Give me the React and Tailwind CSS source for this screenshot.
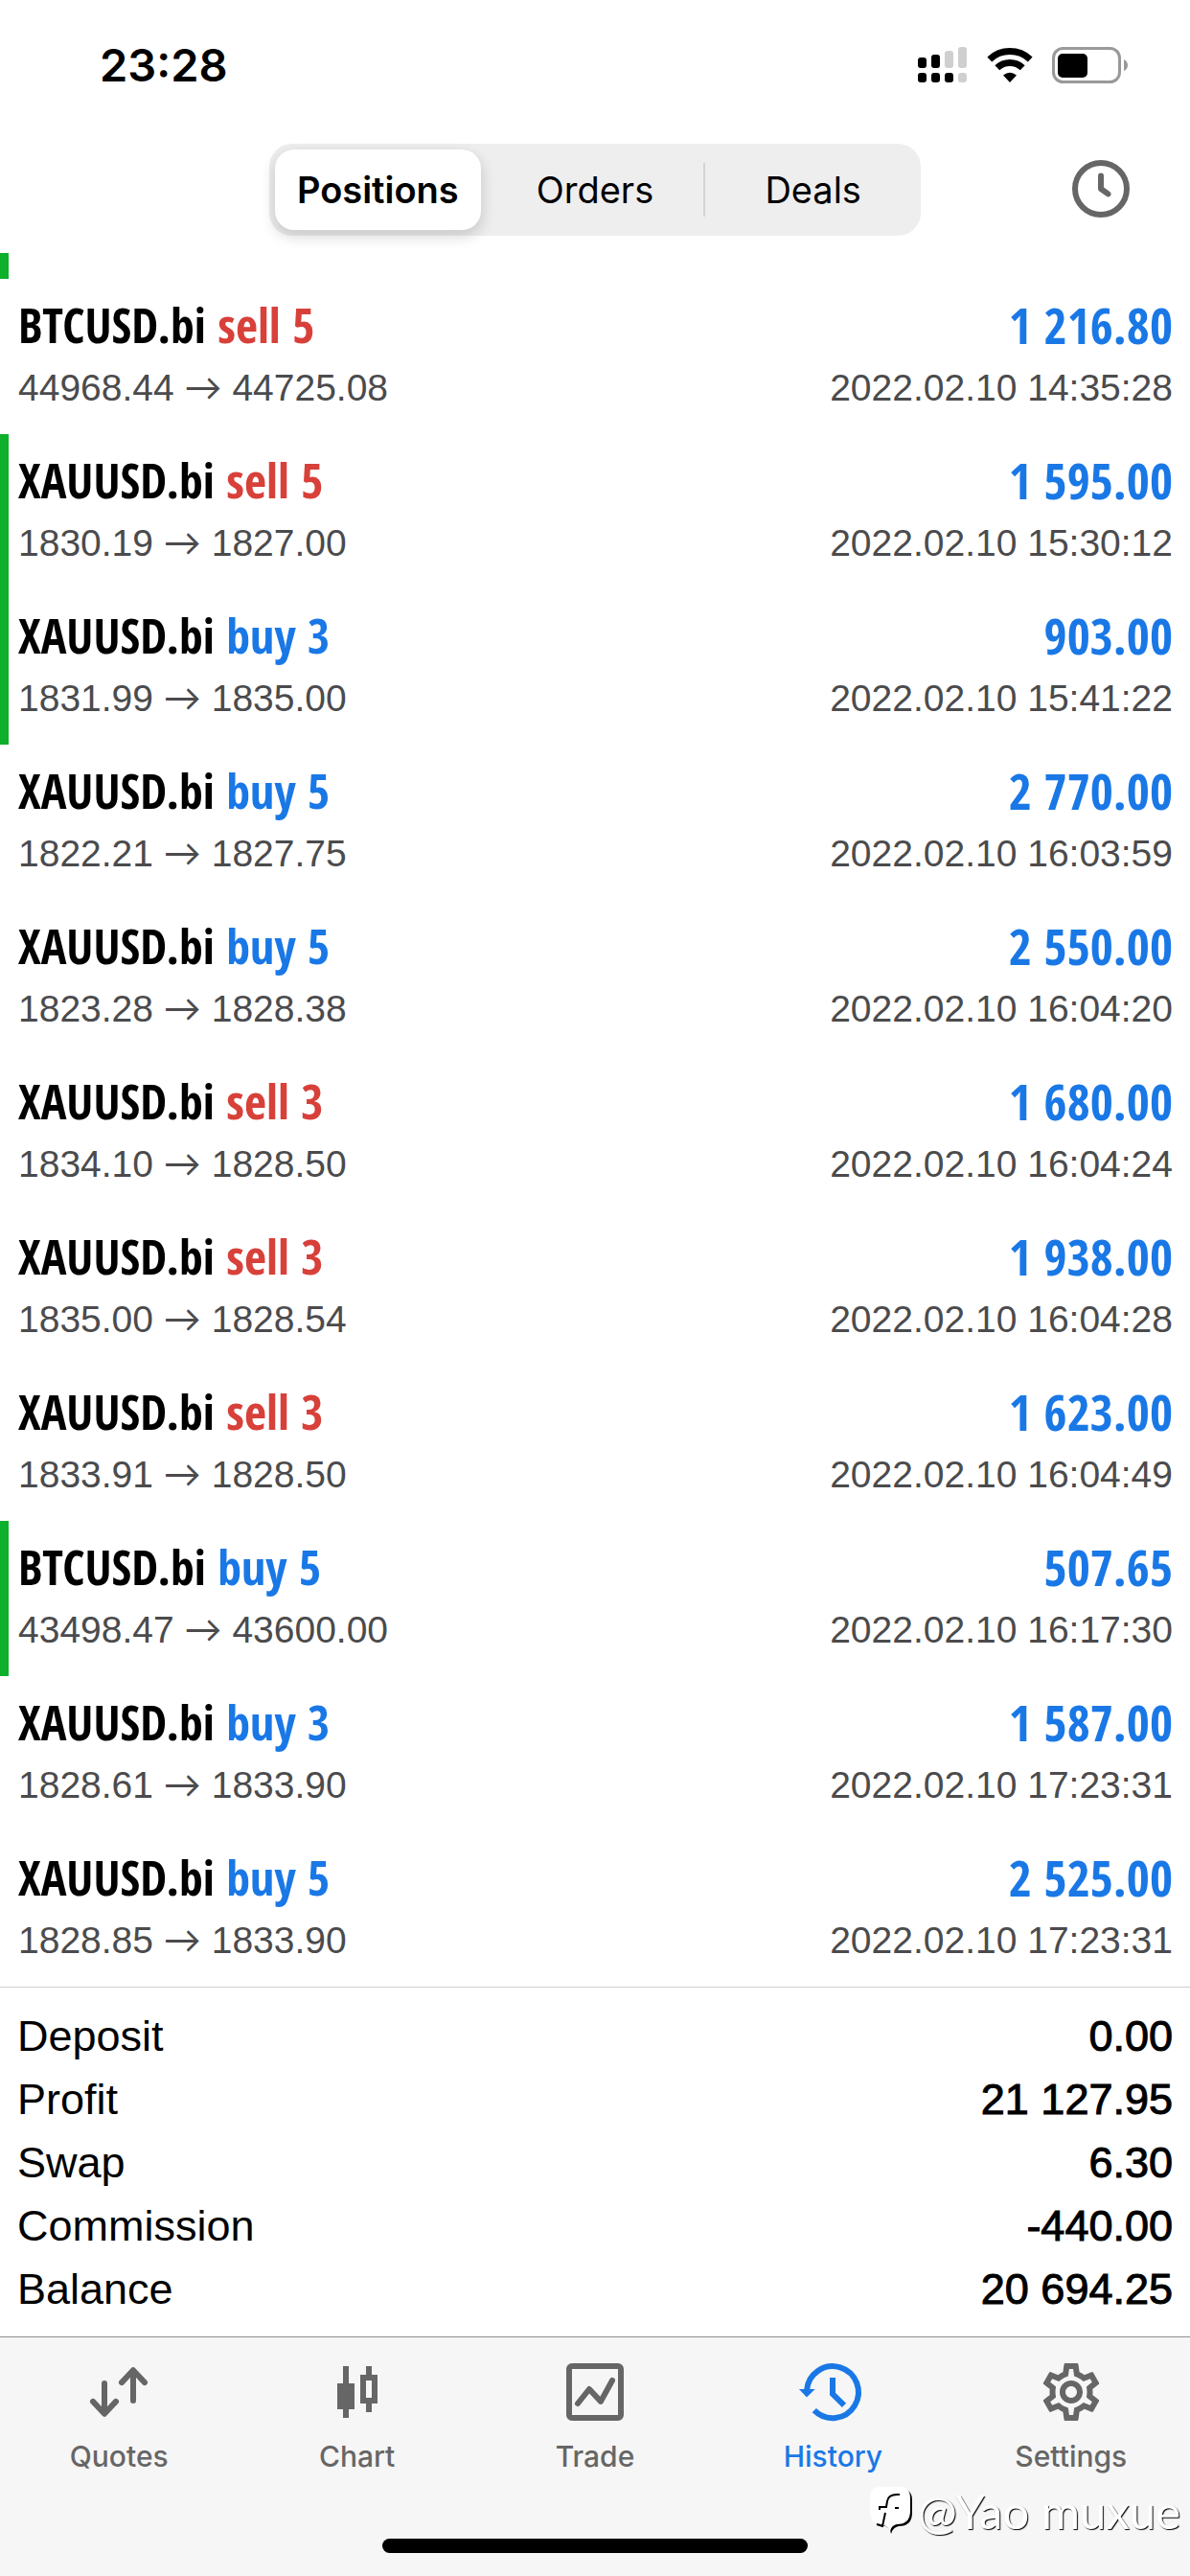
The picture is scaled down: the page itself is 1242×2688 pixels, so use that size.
import { MdOutlineSettings } from 'react-icons/md';

const deals = [
  ['BTCUSD.bi', 'sell', 5, '44968.44', '44725.08', '1 216.80', '14:35:28', false],
  ['XAUUSD.bi', 'sell', 5, '1830.19', '1827.00', '1 595.00', '15:30:12', true],
  ['XAUUSD.bi', 'buy', 3, '1831.99', '1835.00', '903.00', '15:41:22', true],
  ['XAUUSD.bi', 'buy', 5, '1822.21', '1827.75', '2 770.00', '16:03:59', false],
  ['XAUUSD.bi', 'buy', 5, '1823.28', '1828.38', '2 550.00', '16:04:20', false],
  ['XAUUSD.bi', 'sell', 3, '1834.10', '1828.50', '1 680.00', '16:04:24', false],
  ['XAUUSD.bi', 'sell', 3, '1835.00', '1828.54', '1 938.00', '16:04:28', false],
  ['XAUUSD.bi', 'sell', 3, '1833.91', '1828.50', '1 623.00', '16:04:49', false],
  ['BTCUSD.bi', 'buy', 5, '43498.47', '43600.00', '507.65', '16:17:30', true],
  ['XAUUSD.bi', 'buy', 3, '1828.61', '1833.90', '1 587.00', '17:23:31', false],
  ['XAUUSD.bi', 'buy', 5, '1828.85', '1833.90', '2 525.00', '17:23:31', false],
];

const totals = [
  ['Deposit', '0.00'],
  ['Profit', '21 127.95'],
  ['Swap', '6.30'],
  ['Commission', '-440.00'],
  ['Balance', '20 694.25'],
];

function StatusBar() {
  return (
    <div className="flex h-[138px] items-start justify-between pl-[104px] pr-16 pt-[38px] font-['Inter',sans-serif]">
      <span className="text-[47px] font-semibold leading-[60px]">23:28</span>
      <div className="flex h-[60px] items-center gap-5">
        <svg width="52" height="38" viewBox="0 0 52 38" aria-label="Signal">
          <g fill="#000">
            <rect x="0" y="11" width="9" height="11" rx="3" />
            <rect x="14" y="8" width="9" height="14" rx="3" />
            <rect x="0" y="27" width="9" height="10" rx="3" />
            <rect x="14" y="27" width="9" height="10" rx="3" />
            <rect x="28" y="27" width="9" height="10" rx="3" />
          </g>
          <g fill="#cfcfcf">
            <rect x="28" y="4" width="9" height="18" rx="3" />
            <rect x="42" y="0" width="9" height="22" rx="3" />
            <rect x="42" y="27" width="9" height="10" rx="3" />
          </g>
        </svg>
        <svg width="48" height="38" viewBox="0 0 48 38" aria-label="Wi-Fi">
          <g fill="none" stroke="#000" strokeWidth="7">
            <path d="M2.800 13A31 31 0 0 1 45.200 13" />
            <path d="M10.800 21.800A19 19 0 0 1 37.200 21.800" />
          </g>
          <path d="M24 37l-7-7.500q7-5.500 14 0z" fill="#000" />
        </svg>
        <svg width="80" height="38" viewBox="0 0 80 38" aria-label="Battery">
          <rect x="1.500" y="1.500" width="69" height="35" rx="10" fill="#fff" stroke="#999" strokeWidth="3" />
          <rect x="6" y="7" width="31" height="25" rx="5" />
          <path d="M75 13Q79 15 79 19Q79 23 75 25Z" fill="#999" />
        </svg>
      </div>
    </div>
  );
}

function Header() {
  return (
    <header className="grid h-[126px] grid-cols-[1fr_680px_1fr] items-start pt-3 font-['Inter',sans-serif] text-[38px]">
      <span />
      <div role="tablist" className="grid h-24 grid-cols-3 items-center rounded-3xl bg-[#eeeeef]">
        <button
          role="tab"
          aria-selected="true"
          className="mx-1.5 h-[84px] rounded-[20px] bg-white font-semibold shadow-[0_6px_14px_2px_rgba(0,0,0,0.14)]"
        >
          Positions
        </button>
        <button role="tab" aria-selected="false" className="h-14">
          Orders
        </button>
        <button role="tab" aria-selected="false" className="h-14 border-l-2 border-[#d3d3d6]">
          Deals
        </button>
      </div>
      <button aria-label="Period" className="mr-[57px] mt-[11px] justify-self-end">
        <svg width="72" height="72" viewBox="0 0 24 24" fill="none" stroke="#666" strokeWidth="2">
          <circle cx="12" cy="12" r="9" />
          <path d="M12 7.500V12l2.500 1.800" strokeLinecap="round" strokeLinejoin="round" />
        </svg>
      </button>
    </header>
  );
}

function DealRow({ deal }) {
  const [symbol, side, volume, open, close, profit, time, marked] = deal;
  return (
    <li
      className={`flex h-[162px] justify-between border-l-[9px] pl-2.5 pr-[18px] pt-6 ${marked ? 'border-[#0db02b]' : 'border-transparent'}`}
    >
      <div>
        <p className="font-['Open_Sans_Condensed','Roboto_Condensed',sans-serif] text-[50px] font-bold leading-[48px]">
          {symbol} <span className={side === 'sell' ? 'text-[#d8403a]' : 'text-[#1a78e6]'}>{side} {volume}</span>
        </p>
        <p className="mt-4 text-[39px] leading-[52px] text-[#4b4b4d]">
          {open} <span className="font-['Lato',sans-serif] leading-none">→</span> {close}
        </p>
      </div>
      <div className="text-right">
        <p className="font-['Open_Sans_Condensed','Roboto_Condensed',sans-serif] text-[52px] font-bold leading-[48px] text-[#1a78e6]">
          {profit}
        </p>
        <p className="mt-4 text-[39px] leading-[52px] text-[#4b4b4d]">2022.02.10 {time}</p>
      </div>
    </li>
  );
}

const icons = {
  Quotes: (
    <g fill="none" stroke="currentColor" strokeWidth="2" strokeLinecap="round" strokeLinejoin="round">
      <path d="M7 9v10.500M3 15.300l4 4.300 4-4.300" />
      <path d="M17 15V4.500M13 8.700l4-4.300 4 4.300" />
    </g>
  ),
  Chart: (
    <g fill="currentColor">
      <path d="M7 3h2v6h2v9H9v3H7v-3H5V9h2z" />
      <path fillRule="evenodd" d="M15 3h2v3h2v10h-2v3h-2v-3h-2V6h2zM15 8v6h2V8z" />
    </g>
  ),
  Trade: (
    <g fill="none" stroke="currentColor" strokeWidth="2" strokeLinecap="round" strokeLinejoin="round">
      <rect x="3" y="3" width="18" height="18" rx="1" />
      <path d="M6 16l4-5 4 4.300L18 8" />
    </g>
  ),
  History: (
    <g fill="none" stroke="currentColor" strokeWidth="2" transform="translate(-1 0)">
      <path d="M4 11.500A9 9 0 1 1 6.600 18.400" />
      <path d="M13 7v5.700l4 3.900" />
      <path d="M1.300 11h5.600L4 13.800z" fill="currentColor" stroke="none" />
    </g>
  ),
  Settings: <MdOutlineSettings size={24} />,
};

function TabBar() {
  return (
    <footer className="relative border-t border-[#8e8e8e] bg-[#f6f6f6] pb-6 font-['Inter',sans-serif]">
      <nav className="grid h-[210px] grid-cols-5 pt-[21px]">
        {Object.keys(icons).map((name) => (
          <a
            key={name}
            href={`#${name.toLowerCase()}`}
            className={`flex flex-col items-center text-[30px] font-medium leading-9 ${name === 'History' ? 'text-[#1a78e6]' : 'text-[#666]'}`}
          >
            <svg width="72" height="72" viewBox="0 0 24 24" className="overflow-visible" aria-hidden="true">
              {icons[name]}
            </svg>
            <span className="mt-[13px]">{name}</span>
          </a>
        ))}
      </nav>
      <div className="mx-auto h-[15px] w-[444px] rounded-full bg-black" />
      <div className="absolute bottom-[38px] right-2.5 flex items-center gap-1">
        <svg width="46" height="52" viewBox="0 0 46 52" aria-hidden="true">
          <path d="M12 3h20q12 0 12 12v13q0 14-14 14-6 1-8 8-1-7-9-9Q4 39 2 27V14Q2 3 12 3z" fill="#000" />
          <path d="M11 1h20q11 0 11 12v13q0 14-14 14-6 1-7 8-2-6-9-8Q0 39 0 27V12Q0 1 11 1z" fill="#fff" />
          <path d="M31 9q-12-1-13 7l-1 6h-7v3M16 28l-3 14-6-2M26 23h4" fill="none" stroke="#000" strokeWidth="2" />
        </svg>
        <span className="font-['Lato','Noto_Sans_CJK_SC',sans-serif] text-[49px] leading-[60px] text-white [text-shadow:1px_1px_1px_#000]">
          @Yao muxue
        </span>
      </div>
    </footer>
  );
}

export default function App() {
  return (
    <div className="flex min-h-screen flex-col bg-white font-['Liberation_Sans',Arial,sans-serif] text-black">
      <StatusBar />
      <Header />
      <main className="flex-1">
        <div className="h-[27px] w-[9px] bg-[#0db02b]" />
        <ul>
          {deals.map((deal, i) => (
            <DealRow key={i} deal={deal} />
          ))}
        </ul>
        <dl className="border-t border-[#cfcfcf] px-[18px] pb-4 pt-[18px] text-[45px] leading-[66px]">
          {totals.map(([label, value]) => (
            <div key={label} className="flex justify-between">
              <dt>{label}</dt>
              <dd className="[-webkit-text-stroke:1px_#000]">{value}</dd>
            </div>
          ))}
        </dl>
      </main>
      <TabBar />
    </div>
  );
}
